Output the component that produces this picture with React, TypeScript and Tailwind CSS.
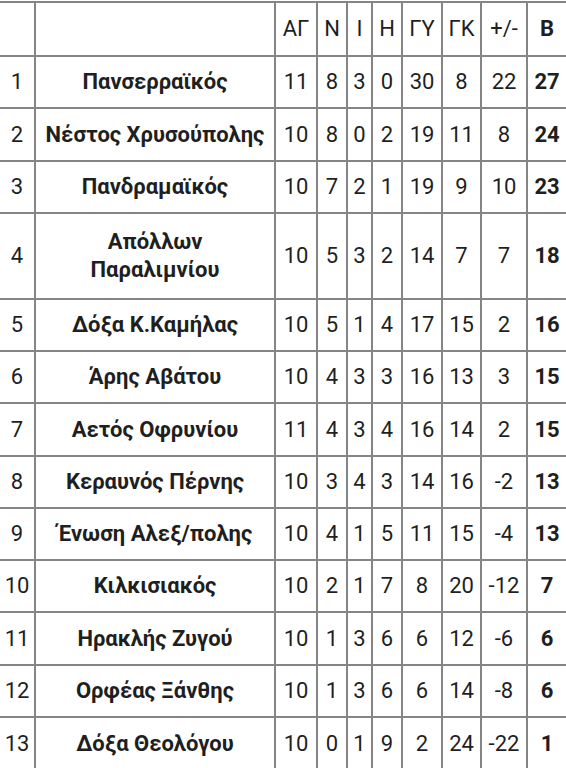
import React from 'react';

type Row = {
	pos: number;
	team: React.ReactNode;
	played: number;
	wins: number;
	draws: number;
	losses: number;
	goalsFor: number;
	goalsAgainst: number;
	diff: number;
	points: number;
	h: string;
};

const rows: Row[] = [
	{ pos: 1, team: 'Πανσερραϊκός', played: 11, wins: 8, draws: 3, losses: 0, goalsFor: 30, goalsAgainst: 8, diff: 22, points: 27, h: 'h-[52px]' },
	{ pos: 2, team: 'Νέστος Χρυσούπολης', played: 10, wins: 8, draws: 0, losses: 2, goalsFor: 19, goalsAgainst: 11, diff: 8, points: 24, h: 'h-[53px]' },
	{ pos: 3, team: 'Πανδραμαϊκός', played: 10, wins: 7, draws: 2, losses: 1, goalsFor: 19, goalsAgainst: 9, diff: 10, points: 23, h: 'h-[52px]' },
	{
		pos: 4,
		team: (
			<>
				Απόλλων
				<br />
				Παραλιμνίου
			</>
		),
		played: 10, wins: 5, draws: 3, losses: 2, goalsFor: 14, goalsAgainst: 7, diff: 7, points: 18,
		h: 'h-[86px]',
	},
	{ pos: 5, team: 'Δόξα Κ.Καμήλας', played: 10, wins: 5, draws: 1, losses: 4, goalsFor: 17, goalsAgainst: 15, diff: 2, points: 16, h: 'h-[52px]' },
	{ pos: 6, team: 'Άρης Αβάτου', played: 10, wins: 4, draws: 3, losses: 3, goalsFor: 16, goalsAgainst: 13, diff: 3, points: 15, h: 'h-[52px]' },
	{ pos: 7, team: 'Αετός Οφρυνίου', played: 11, wins: 4, draws: 3, losses: 4, goalsFor: 16, goalsAgainst: 14, diff: 2, points: 15, h: 'h-[53px]' },
	{ pos: 8, team: 'Κεραυνός Πέρνης', played: 10, wins: 3, draws: 4, losses: 3, goalsFor: 14, goalsAgainst: 16, diff: -2, points: 13, h: 'h-[52px]' },
	{ pos: 9, team: 'Ένωση Αλεξ/πολης', played: 10, wins: 4, draws: 1, losses: 5, goalsFor: 11, goalsAgainst: 15, diff: -4, points: 13, h: 'h-[52px]' },
	{ pos: 10, team: 'Κιλκισιακός', played: 10, wins: 2, draws: 1, losses: 7, goalsFor: 8, goalsAgainst: 20, diff: -12, points: 7, h: 'h-[52px]' },
	{ pos: 11, team: 'Ηρακλής Ζυγού', played: 10, wins: 1, draws: 3, losses: 6, goalsFor: 6, goalsAgainst: 12, diff: -6, points: 6, h: 'h-[53px]' },
	{ pos: 12, team: 'Ορφέας Ξάνθης', played: 10, wins: 1, draws: 3, losses: 6, goalsFor: 6, goalsAgainst: 14, diff: -8, points: 6, h: 'h-[52px]' },
	{ pos: 13, team: 'Δόξα Θεολόγου', played: 10, wins: 0, draws: 1, losses: 9, goalsFor: 2, goalsAgainst: 24, diff: -22, points: 1, h: 'h-[53px]' },
];

const headers = ['', '', 'ΑΓ', 'Ν', 'Ι', 'Η', 'ΓΥ', 'ΓΚ', '+/-'];

const cell = 'flex items-center justify-center text-center border-r-2 border-b-2 border-[#858585]';

export default function App() {
	return (
		<div className="w-[566px] h-[768px] overflow-hidden bg-white pt-px text-[22px] text-[#1f1f1f] font-['Roboto',sans-serif] leading-[28px]">
			<div className="grid w-[580px] grid-cols-[36px_240px_42px_30px_25px_30px_40px_39px_46px_40px] border-t-2 border-[#858585]">
				{headers.map((h, i) => (
					<div key={i} className={`${cell} h-[54px]`}>
						{h}
					</div>
				))}
				<div className={`${cell} h-[54px] font-bold`}>Β</div>

				{rows.map((r) => (
					<React.Fragment key={r.pos}>
						<div className={`${cell} ${r.h}`}>{r.pos}</div>
						<div className={`${cell} ${r.h} px-2 font-bold`}>{r.team}</div>
						<div className={`${cell} ${r.h}`}>{r.played}</div>
						<div className={`${cell} ${r.h}`}>{r.wins}</div>
						<div className={`${cell} ${r.h}`}>{r.draws}</div>
						<div className={`${cell} ${r.h}`}>{r.losses}</div>
						<div className={`${cell} ${r.h}`}>{r.goalsFor}</div>
						<div className={`${cell} ${r.h}`}>{r.goalsAgainst}</div>
						<div className={`${cell} ${r.h}`}>{r.diff}</div>
						<div className={`${cell} ${r.h} font-bold`}>{r.points}</div>
					</React.Fragment>
				))}
			</div>
		</div>
	);
}
